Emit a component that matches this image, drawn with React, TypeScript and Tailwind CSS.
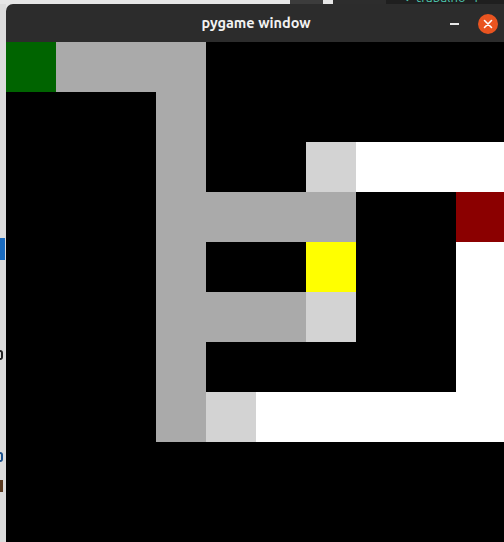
const rows = [
  "GAAA......",
  "...A......",
  "...A..LWWW",
  "...AAAA..R",
  "...A..Y..W",
  "...AAAL..W",
  "...A.....W",
  "...ALWWWWW",
  "..........",
  "..........",
]

const colors: Record<string, string> = {
  G: "bg-[#006400]",
  A: "bg-[#aaaaaa]",
  L: "bg-[#d3d3d3]",
  W: "bg-white",
  R: "bg-[#8b0000]",
  Y: "bg-[#ffff00]",
  ".": "bg-black",
}

export default function App() {
  return (
    <div className="w-[504px] h-[542px] overflow-hidden flex flex-col bg-[#e6e6e6] font-['Ubuntu','Open_Sans','DejaVu_Sans',sans-serif]">
      {/* desktop strip above the window */}
      <div className="h-[4px] flex shrink-0">
        <div className="w-[290px] bg-[#e6e6e6]" />
        <div className="w-[33px] bg-[#3c3c3c]" />
        <div className="w-[10px] bg-[#e6e6e6]" />
        <div className="w-[53px] bg-[#2d2d2d]" />
        <div className="flex-1 bg-[#1f1f1f] overflow-hidden relative">
          <span className="absolute left-[18px] top-[-9px] text-[13px] leading-[13px] text-[#4ec9b0] whitespace-nowrap">✓ trabalho_1</span>
        </div>
      </div>

      <div className="flex flex-1 min-h-0">
        {/* editor peeking out on the left */}
        <div className="w-[6px] shrink-0 bg-[#dcdcdc] flex flex-col">
          <div className="h-[234px]" />
          <div className="h-[22px] w-[5px] bg-[#1a6bbf]" />
          <div className="h-[90px]" />
          <div className="h-[10px] w-[3px] border-2 border-l-0 border-[#222] rounded-r" />
          <div className="h-[92px]" />
          <div className="h-[10px] w-[3px] border-2 border-l-0 border-[#1a4f8a] rounded-r" />
          <div className="h-[18px]" />
          <div className="h-[12px] w-[3px] bg-[#5a3a20]" />
        </div>

        <div className="flex-1 flex flex-col min-w-0">
          <div className="h-[38px] shrink-0 bg-[#2c2c2c] rounded-tl-[7px] relative flex items-center justify-center">
            <span className="text-[#f2f2f2] text-[14.5px] font-bold pl-[2px]">pygame window</span>
            <div className="absolute left-[444px] top-[19px] w-[9px] h-[1.5px] bg-[#e8e8e8]" />
            <div className="absolute left-[472px] top-[10px] w-[20px] h-[20px] rounded-full bg-[#e95420] flex items-center justify-center">
              <svg width="10" height="10" viewBox="0 0 10 10">
                <path d="M1.5 1.5 L8.5 8.5 M8.5 1.5 L1.5 8.5" stroke="#fff" strokeWidth="1.6" strokeLinecap="round" />
              </svg>
            </div>
          </div>

          <div className="grid grid-cols-[repeat(10,50px)] auto-rows-[50px] bg-black">
            {rows.map((row, r) =>
              row.split("").map((c, i) => <div key={r + "-" + i} className={colors[c]} />)
            )}
          </div>
        </div>
      </div>
    </div>
  )
}
